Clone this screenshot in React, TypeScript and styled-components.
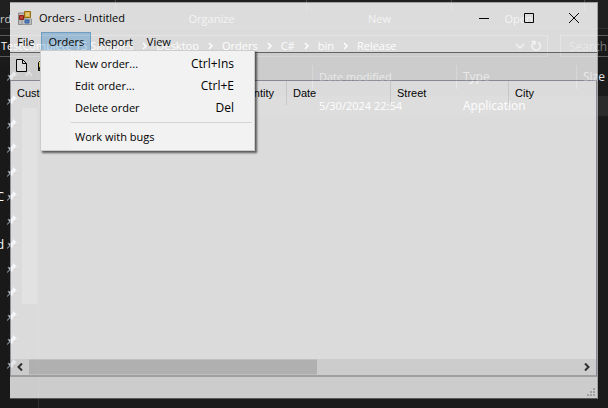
import React from "react";
import styled, { createGlobalStyle } from "styled-components";

const GlobalStyle = createGlobalStyle`
  * { box-sizing: border-box; }
  body { margin: 0; background: #1b1b1b; font-family: "Open Sans", "Noto Sans", sans-serif; font-size: 11px; }
  button, input { font: inherit; }
`;

const Desktop = styled.div`
  position: relative;
  display: flex;
  min-height: 100vh;
  overflow: hidden;
  background: #1b1b1b;
`;

/* ---------- file explorer behind the form ---------- */

const Explorer = styled.section`
  position: absolute;
  inset: 0;
  display: flex;
  flex-direction: column;
  color: #fff;
  white-space: nowrap;
`;

const Ribbon = styled.div`
  display: grid;
  grid-template-columns: 116px 191px 145px 133px 1fr;
  height: 29px;
  background: #202020;
  border-bottom: 1px solid #303030;
`;

const RibbonGroup = styled.div`
  position: relative;
  color: #c0c0c0;
  text-align: center;
  line-height: 18px;
  padding-top: 10px;

  &:not(:last-child)::after {
    content: "";
    position: absolute;
    right: 0;
    top: 0;
    height: 11px;
    border-right: 1px solid #484848;
  }
`;

const RibbonStart = styled(RibbonGroup)`
  text-align: left;
  color: #c8c8c8;
`;

const AddressRow = styled.div`
  display: flex;
  gap: 12px;
  height: 36px;
  padding: 6px 0 8px;
`;

const AddressBar = styled.div`
  display: flex;
  align-items: center;
  width: 548px;
  padding-left: 1px;
  border: solid #5c5c5c;
  border-width: 1px 1px 1px 0;
`;

const Crumbs = styled.nav`
  display: flex;
  flex: 1;
  gap: 9px;
  align-items: center;
`;

const Crumb = styled.button`
  padding: 0;
  border: 0;
  background: none;
  color: #fff;
  line-height: 18px;
`;

const GlyphButton = styled.button`
  display: flex;
  padding: 0;
  margin-right: 5px;
  border: 0;
  background: none;
  color: #bbb;
`;

const SearchBox = styled.input`
  flex: 1;
  min-width: 0;
  padding: 0 0 0 8px;
  border: 1px solid #5c5c5c;
  border-right: 0;
  border-radius: 0;
  background: #191919;
  color: #fff;
  font-size: 12px;
  &::placeholder { color: #777; opacity: 1; }
`;

const ExplorerBody = styled.div`
  display: flex;
  flex: 1;
`;

const NavPane = styled.div`
  display: grid;
  grid-template-columns: 7px 14px 16px 1fr;
  width: 39px;
  background: #191919;
  border-right: 1px solid #303030;
`;

const NavNames = styled.div`
  padding: 120px 3px 0 0;
  direction: rtl;
  font-size: 12px;
  line-height: 24px;
`;

const NavName = styled.div`
  height: 48px;
  overflow: hidden;
`;

const Pins = styled.div`
  svg { display: block; margin: 6px 0 14px; }
`;

const NavScroll = styled.div`
  display: flex;
  flex-direction: column;
  align-items: center;
  gap: 30px;
  padding-top: 5px;
  color: #aaa;
`;

const NavThumb = styled.div`
  width: 15px;
  height: 196px;
  background: #4d4d4d;
`;

const Files = styled.div`
  display: flex;
  flex: 1;
  flex-direction: column;
  gap: 7px;
`;

const FileRow = styled.div<{ $header?: boolean }>`
  display: grid;
  grid-template-columns: 273px 144px 120px 1fr;
  height: ${p => (p.$header ? 24 : 20)}px;
  line-height: ${p => (p.$header ? 24 : 20)}px;
  background: ${p => (p.$header ? "transparent" : "#2b2b2b")};
  color: ${p => (p.$header ? "#dedede" : "#fff")};

  span { padding-left: 6px; }
  span:not(:first-child) { border-left: 1px solid ${p => (p.$header ? "#636363" : "transparent")}; }
  span:nth-child(n + 3) { font-size: 12px; }
`;

/* ---------- translucent form ---------- */

const Form = styled.main`
  position: relative;
  display: flex;
  flex: 1;
  flex-direction: column;
  margin: 2px 10px 9px;
  background: #fdfdfd;
  border: 1px solid #b8b8b8;
  border-bottom-color: #666;
  border-left: 0;
  opacity: 0.85;
  color: #000;
`;

const TitleBar = styled.header`
  display: flex;
  align-items: center;
  height: 29px;
  padding: 0 1px 0 8px;
`;

const Title = styled.h1`
  flex: 1;
  margin: 0 0 0 6px;
  font-size: 11px;
  font-weight: 400;
`;

const CaptionButton = styled.button`
  display: flex;
  align-items: center;
  justify-content: center;
  width: 45px;
  height: 28px;
  padding: 0;
  border: 0;
  background: none;
  color: #000;
`;

const MenuBar = styled.nav`
  display: flex;
  height: 21px;
  border-bottom: 1px solid #707070;
`;

const MenuButton = styled.button<{ $open?: boolean }>`
  height: 20px;
  padding: 0 6px;
  border: 1px solid ${p => (p.$open ? "#7cb4dd" : "transparent")};
  background: ${p => (p.$open ? "#b3d7f3" : "transparent")};
  color: #000;
  line-height: 18px;
`;

const ToolBar = styled.div`
  display: flex;
  align-items: center;
  gap: 11px;
  height: 27px;
  padding: 0 0 3px 6px;
  background: #ececec;
`;

const ToolButton = styled.button`
  display: flex;
  padding: 0;
  border: 0;
  background: none;
`;

const ListView = styled.div`
  display: flex;
  flex: 1;
  flex-direction: column;
  border: 1px solid #9a9ca6;
  border-left-color: #a5a5b0;
  border-bottom: 2px solid #b5b5bb;
`;

const OrdersTable = styled.table`
  width: 100%;
  table-layout: fixed;
  border-collapse: separate;
  border-spacing: 0;
  font: 11px/24px "Liberation Sans", Arial, sans-serif;

  th {
    height: 24px;
    padding: 0 6px;
    border-right: 1px solid #e4e4e4;
    font-weight: 400;
    text-align: left;
    white-space: nowrap;
  }
  th:last-child { border-right: 0; }
`;

const Rows = styled.div`
  flex: 1;
`;

const ScrollBar = styled.div`
  display: flex;
  height: 16px;
  background: #ebebeb;
`;

const ScrollButton = styled.button`
  display: flex;
  align-items: center;
  justify-content: center;
  width: 18px;
  padding: 0;
  border: 0;
  background: none;
`;

const ScrollTrack = styled.div`
  flex: 1;
`;

const ScrollThumb = styled.div`
  height: 100%;
  background: #cbcbcb;
  border: solid #dcdcdc;
  border-width: 1px 0;
`;

const StatusBar = styled.footer`
  display: flex;
  align-items: flex-end;
  justify-content: flex-end;
  height: 21px;
  padding: 0 2px 2px 0;
  background: #ececec;
`;

const DropDown = styled.div`
  position: absolute;
  left: 40px;
  top: 50px;
  width: 215px;
  padding: 2px;
  border: 1px solid #ccc;
  background: linear-gradient(to right, #f0f0f0 30px, #f2f2f2 30px);
  box-shadow: 2px 2px 2px rgba(0, 0, 0, 0.6);
`;

const MenuItem = styled.button`
  display: flex;
  justify-content: space-between;
  width: 100%;
  height: 22px;
  padding: 0 18px 0 32px;
  border: 0;
  background: none;
  color: #000;
  line-height: 22px;
`;

const Shortcut = styled.span`
  font-size: 12px;
`;

const Separator = styled.hr`
  height: 1px;
  margin: 3px 0 3px 28px;
  border: 0;
  background: #d4d4d4;
`;

const Chevron = ({ d, w = 6, h = 8 }: { d: string; w?: number; h?: number }) => (
  <svg width={w} height={h} viewBox={`0 0 ${w} ${h}`} fill="none" stroke="currentColor" strokeWidth="1.5">
    <path d={d} />
  </svg>
);

const Pin = () => (
  <svg width="10" height="10" viewBox="0 0 10 10">
    <path d="M0 9.5 3 6.5M1 4 5 8.5" stroke="#79838a" strokeWidth="1.2" />
    <path d="M6 0 10 3.5 8 4.5 6 6.5 5 9 1.5 5 4 4 5.500 2.500Z" fill="#d2dbe0" />
  </svg>
);

const FormIcon = () => (
  <svg width="15" height="15" viewBox="0 0 15 15">
    <path d="M.5 3h6v11.500H.5z" fill="#d8d8d8" stroke="#999" />
    <path d="M4 9h9.500v5.500H4z" fill="#ddd" stroke="#aaa" />
    <path d="M1.500 5.500h4v4h-4z" fill="#d5493c" stroke="#a51f17" />
    <path d="M6.500 1.500h6v6h-6z" fill="#f7cc4d" stroke="#a8790a" />
    <path d="M8 3h3v3H8z" fill="#ffe58a" />
    <path d="M7 10h4v3H7z" fill="#5b92dc" stroke="#3a6cb8" />
  </svg>
);

const crumbs = ["Desktop", "Orders", "C#", "bin", "Release"];
const columns = [
  { name: "Customer Name", width: 106 },
  { name: "Product", width: 110 },
  { name: "Quantity", width: 60 },
  { name: "Date", width: 104 },
  { name: "Street", width: 118 },
  { name: "City" },
];
const pins = Array.from({ length: 13 }, (_, i) => i);
const scrollShare = 52.5;

export default function App() {
  return (
    <>
      <GlobalStyle />
      <Desktop>
        <Explorer>
          <Ribbon>
            <RibbonStart>rd</RibbonStart>
            <RibbonGroup>Organize</RibbonGroup>
            <RibbonGroup>New</RibbonGroup>
            <RibbonGroup>Open</RibbonGroup>
            <RibbonGroup />
          </Ribbon>
          <AddressRow>
            <AddressBar>
              <Crumbs>
                <Crumb>TestComplete 15 Samples</Crumb>
                {crumbs.map(name => (
                  <React.Fragment key={name}>
                    <Chevron d="M1 1 4 4 1 7" w={5} />
                    <Crumb>{name}</Crumb>
                  </React.Fragment>
                ))}
              </Crumbs>
              <GlyphButton aria-label="Recent locations">
                <Chevron d="M1 2 5 6 9 2" w={10} />
              </GlyphButton>
              <GlyphButton aria-label="Refresh">
                <svg width="12" height="12" viewBox="0 0 12 12" fill="none" stroke="currentColor" strokeWidth="1.500">
                  <path d="M4 2.500A4.200 4.200 0 1 0 8.500 2.500M1.500 1.500H5V5" />
                </svg>
              </GlyphButton>
            </AddressBar>
            <SearchBox aria-label="Search" placeholder="Search Release" />
          </AddressRow>
          <ExplorerBody>
            <NavPane>
              <NavNames>
                <NavName>C</NavName>
                <NavName>d</NavName>
              </NavNames>
              <Pins>{pins.map(i => <Pin key={i} />)}</Pins>
              <NavScroll>
                <Chevron d="M1 6 4 2 7 6" w={8} />
                <NavThumb />
              </NavScroll>
            </NavPane>
            <Files>
              <FileRow $header>
                <span />
                <span>Date modified</span>
                <span>Type</span>
                <span>Size</span>
              </FileRow>
              <FileRow>
                <span />
                <span>5/30/2024 22:54</span>
                <span>Application</span>
                <span />
              </FileRow>
            </Files>
          </ExplorerBody>
        </Explorer>

        <Form>
          <TitleBar>
            <FormIcon />
            <Title>Orders - Untitled</Title>
            <CaptionButton aria-label="Minimize">
              <svg width="10" height="10" viewBox="0 0 10 10"><path d="M0 5.500h10" stroke="currentColor" /></svg>
            </CaptionButton>
            <CaptionButton aria-label="Maximize">
              <svg width="10" height="10" viewBox="0 0 10 10"><path d="M.5.500h9v9h-9z" fill="none" stroke="currentColor" /></svg>
            </CaptionButton>
            <CaptionButton aria-label="Close">
              <svg width="10" height="10" viewBox="0 0 10 10"><path d="m0 0 10 10M10 0 0 10" stroke="currentColor" /></svg>
            </CaptionButton>
          </TitleBar>
          <MenuBar>
            <MenuButton>File</MenuButton>
            <MenuButton $open>Orders</MenuButton>
            <MenuButton>Report</MenuButton>
            <MenuButton>View</MenuButton>
          </MenuBar>
          <ToolBar>
            <ToolButton aria-label="New">
              <svg width="11" height="13" viewBox="0 0 11 13">
                <path d="M.5.500h6l4 4v8H.5z" fill="#fff" stroke="#000" />
                <path d="M6.500.500v4h4" fill="none" stroke="#000" />
              </svg>
            </ToolButton>
            <ToolButton aria-label="Open">
              <svg width="15" height="11" viewBox="0 0 15 11">
                <path d="M.5 10.500v-8l1-1h3l1 1h5v2" fill="#f5ee70" stroke="#000" />
                <path d="M.5 10.500 3 5h11l-3 5.500z" fill="#8a8520" stroke="#000" />
              </svg>
            </ToolButton>
          </ToolBar>
          <ListView>
            <OrdersTable>
              <colgroup>
                {columns.map(c => <col key={c.name} style={{ width: c.width }} />)}
              </colgroup>
              <thead>
                <tr>{columns.map(c => <th key={c.name} scope="col">{c.name}</th>)}</tr>
              </thead>
            </OrdersTable>
            <Rows />
            <ScrollBar>
              <ScrollButton aria-label="Scroll left">
                <svg width="6" height="8" viewBox="0 0 6 8"><path d="M5 .5 1.500 4 5 7.500" fill="none" stroke="#333" strokeWidth="2" /></svg>
              </ScrollButton>
              <ScrollTrack><ScrollThumb style={{ width: `${scrollShare}%` }} /></ScrollTrack>
              <ScrollButton aria-label="Scroll right">
                <svg width="6" height="8" viewBox="0 0 6 8"><path d="M1 .5 4.500 4 1 7.500" fill="none" stroke="#333" strokeWidth="2" /></svg>
              </ScrollButton>
            </ScrollBar>
          </ListView>
          <StatusBar>
            <svg width="8" height="8" viewBox="0 0 8 8" fill="#b8b8b8">
              <path d="M6 0h2v2H6zM3 3h2v2H3zM6 3h2v2H6zM0 6h2v2H0zM3 6h2v2H3zM6 6h2v2H6z" />
            </svg>
          </StatusBar>
        </Form>

        <DropDown role="menu">
          <MenuItem role="menuitem"><span>New order...</span><Shortcut>Ctrl+Ins</Shortcut></MenuItem>
          <MenuItem role="menuitem"><span>Edit order...</span><Shortcut>Ctrl+E</Shortcut></MenuItem>
          <MenuItem role="menuitem"><span>Delete order</span><Shortcut>Del</Shortcut></MenuItem>
          <Separator />
          <MenuItem role="menuitem"><span>Work with bugs</span></MenuItem>
        </DropDown>
      </Desktop>
    </>
  );
}
